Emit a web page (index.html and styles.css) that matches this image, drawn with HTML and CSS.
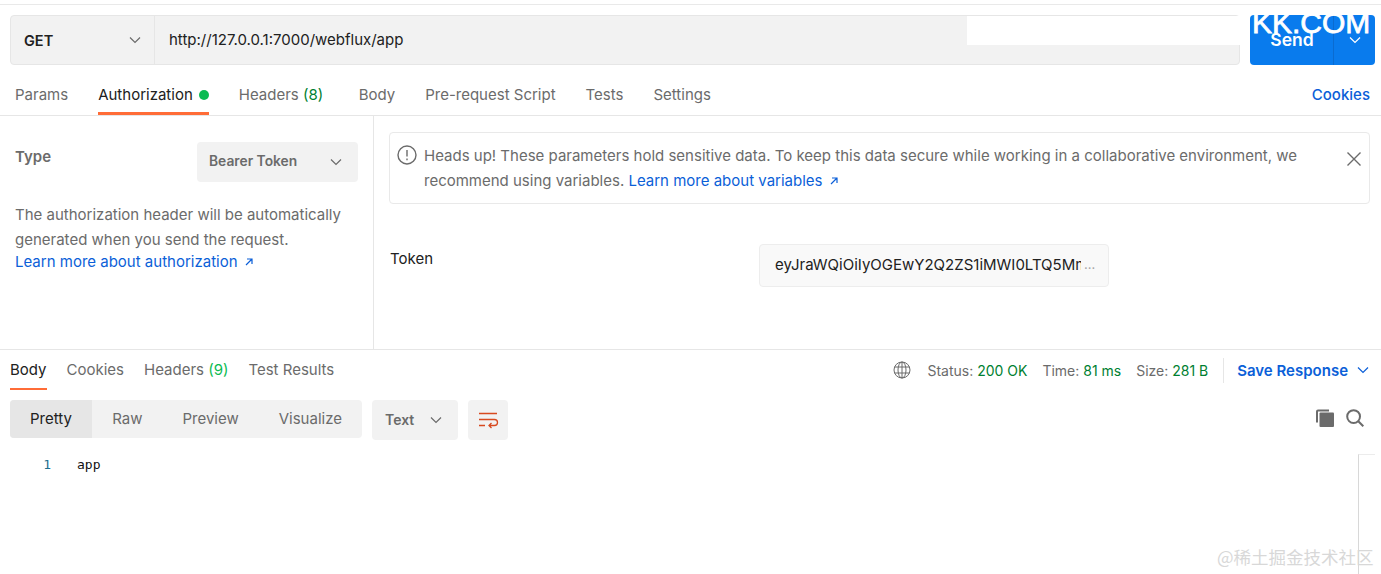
FILE: index.html
```html
<!DOCTYPE html>
<html lang="en">
<head>
<meta charset="utf-8">
<title>Postman request</title>
<link rel="stylesheet" href="styles.css">
</head>
<body>
<div class="app">
  <section class="urlbar">
    <div class="urlgroup">
      <div class="method"><span>GET</span>
        <svg class="chev" viewBox="0 0 12 8"><path d="M1 1.5l5 5 5-5"/></svg>
      </div>
      <div class="url">http://127.0.0.1:7000/webflux/app</div>
    </div>
    <div class="send">
      <div class="send-main">Send</div>
      <div class="send-more"><svg class="chev" viewBox="0 0 12 8"><path d="M1 1.5l5 5 5-5"/></svg></div>
    </div>
  </section>

  <nav class="reqtabs">
    <a class="tab">Params</a>
    <a class="tab active">Authorization<i class="dot"></i></a>
    <a class="tab counted">Headers <em class="count">(8)</em></a>
    <a class="tab">Body</a>
    <a class="tab">Pre-request Script</a>
    <a class="tab">Tests</a>
    <a class="tab">Settings</a>
    <a class="cookies">Cookies</a>
  </nav>

  <section class="auth">
    <aside class="auth-left">
      <div class="type-row">
        <span class="type-label">Type</span>
        <div class="select"><span>Bearer Token</span>
          <svg class="chev" viewBox="0 0 12 8"><path d="M1 1.5l5 5 5-5"/></svg>
        </div>
      </div>
      <p class="desc">The authorization header will be automatically generated when you send the request.</p>
      <a class="learn">Learn more about authorization <svg class="arrow" viewBox="0 0 10 10"><path d="M2 8l6-6M3 2h5v5"/></svg></a>
    </aside>
    <div class="auth-right">
      <div class="notice">
        <svg class="info" viewBox="0 0 20 20"><circle cx="10" cy="10" r="9"/><path d="M10 5v6.5M10 13.6v1.6"/></svg>
        <p>Heads up! These parameters hold sensitive data. To keep this data secure while working in a collaborative environment, we recommend using variables. <a class="link">Learn more about variables <svg class="arrow" viewBox="0 0 10 10"><path d="M2 8l6-6M3 2h5v5"/></svg></a></p>
        <svg class="close" viewBox="0 0 16 16"><path d="M1.5 1.5l13 13M14.5 1.5l-13 13"/></svg>
      </div>
      <div class="token-row">
        <span class="token-label">Token</span>
        <div class="token-input"><span class="token-text">eyJraWQiOiIyOGEwY2Q2ZS1iMWI0LTQ5Mm</span><span class="token-dots">...</span></div>
      </div>
    </div>
  </section>

  <section class="response">
    <div class="restabs">
      <nav class="restab-list">
        <a class="rtab active">Body</a>
        <a class="rtab">Cookies</a>
        <a class="rtab">Headers <em class="count light">(9)</em></a>
        <a class="rtab">Test Results</a>
      </nav>
      <div class="status">
        <svg class="globe" viewBox="0 0 18 18"><circle cx="9" cy="9" r="8"/><ellipse cx="9" cy="9" rx="4" ry="8"/><path d="M1.6 6h14.8M1.6 12h14.8M9 1v16"/></svg>
        <span class="stat">Status: <b>200 OK</b></span>
        <span class="stat">Time: <b>81 ms</b></span>
        <span class="stat">Size: <b>281 B</b></span>
        <span class="vr"></span>
        <a class="save">Save Response</a>
        <svg class="chev blue" viewBox="0 0 12 8"><path d="M1 1.5l5 5 5-5"/></svg>
      </div>
    </div>
    <div class="toolbar">
      <div class="segment">
        <span class="seg on">Pretty</span>
        <span class="seg">Raw</span>
        <span class="seg">Preview</span>
        <span class="seg">Visualize</span>
      </div>
      <div class="format"><span>Text</span>
        <svg class="chev" viewBox="0 0 12 8"><path d="M1 1.5l5 5 5-5"/></svg>
      </div>
      <div class="wrap-btn">
        <svg viewBox="0 0 20 16"><path d="M1 1.5h18M1 7.5h15.5a2.8 2.8 0 0 1 0 6H11M13.5 11l-2.5 2.5 2.5 2.5M1 13.5h6"/></svg>
      </div>
      <div class="tools">
        <svg class="copy" viewBox="0 0 18 18"><path class="copy-back" d="M0 2.5A2 2 0 0 1 2 .5h11v2H2v11H0z"/><rect x="3.5" y="3.5" width="14.5" height="14.5" rx="1"/></svg>
        <svg class="search" viewBox="0 0 18 18"><circle cx="7.6" cy="7.6" r="6.4"/><path d="M12.3 12.3l5 5"/></svg>
      </div>
    </div>
    <div class="code">
      <span class="ln">1</span><span class="src">app</span>
      <span class="scrolltrack"></span>
    </div>
  </section>
</div>
<div class="wm-patch"></div>
<div class="wm-top">KK.COM</div>
<div class="wm-bottom">@稀土掘金技术社区</div>
</body>
</html>
```
FILE: styles.css
```css
* { box-sizing: border-box; }
html, body { margin: 0; height: 100%; }
body {
  background: #fff;
  color: #6b6b6b;
  font-family: Inter, "Noto Sans", sans-serif;
  font-size: 15px;
  overflow: hidden;
  position: relative;
}
a { color: inherit; text-decoration: none; }
em { font-style: normal; }
p { margin: 0; }
svg { display: block; flex: none; }

.app { display: flex; flex-direction: column; height: 574px; padding-top: 4px; }

.chev { width: 12px; height: 8px; fill: none; stroke: #6b6b6b; stroke-width: 1.2; }
.chev.blue { stroke: #0b5fd8; }
.arrow { display: inline-block; width: 10px; height: 10px; fill: none; stroke: currentColor; stroke-width: 1.2; margin-left: 2px; }

.urlbar {
  display: flex;
  gap: 10px;
  height: 61px;
  padding: 10px 6px 0 10px;
  border-top: 1px solid #e9e9e9;
}
.urlgroup {
  flex: 1;
  display: flex;
  height: 50px;
  background: #f2f2f2;
  border: 1px solid #e6e6e6;
  border-radius: 4px;
}
.method {
  width: 144px;
  display: flex;
  align-items: center;
  justify-content: space-between;
  padding: 0 13px;
  color: #212121;
  font-size: 14.5px;
  font-weight: 600;
  border-right: 1px solid #e6e6e6;
}
.url { padding: 0 14px; line-height: 47px; color: #212121; }
.send {
  width: 125px;
  height: 50px;
  display: flex;
  background: #097bed;
  color: #fff;
  border-radius: 4px;
  font-weight: 600;
  font-size: 17.5px;
}
.send-main { width: 84px; padding-left: 1px; text-align: center; line-height: 49px; border-right: 1px solid #0a6bd0; }
.send-more { flex: 1; display: flex; align-items: center; justify-content: center; padding-bottom: 1px; }
.send-more .chev { stroke: #fff; }

.reqtabs {
  display: flex;
  align-items: stretch;
  height: 51px;
  padding: 0 11px 0 15px;
  gap: 30px;
  border-bottom: 1px solid #e6e6e6;
}
.tab { display: flex; align-items: center; padding-top: 9px; white-space: pre; }
.tab.active { color: #212121; gap: 6px; border-bottom: 3px solid #ff6c37; padding-top: 12px; }
.tab.counted { margin-right: 5.5px; }
.dot { width: 10px; height: 10px; border-radius: 50%; background: #0cbb52; }
.count { color: #007f31; }
.count.light { color: #0cbb52; }
.cookies { margin-left: auto; align-self: center; padding-top: 9px; color: #0b5fd8; font-weight: 500; }

.auth { display: flex; height: 234px; border-bottom: 1px solid #e6e6e6; }
.auth-left {
  width: 374px;
  padding: 26px 15px 0;
  border-right: 1px solid #e6e6e6;
  line-height: 22px;
}
.type-row { display: flex; justify-content: space-between; align-items: flex-start; }
.type-label { font-weight: 600; margin-top: 4px; }
.select {
  width: 161px;
  height: 40px;
  padding: 0 16px 2px 12px;
  display: flex;
  align-items: center;
  justify-content: space-between;
  background: #f2f2f2;
  border-radius: 4px;
  font-size: 13.8px;
  font-weight: 600;
}
.select .chev { margin-top: 2px; }
.desc { margin-top: 20px; line-height: 25px; width: 340px; }
.learn { display: block; color: #0b5fd8; margin-top: -1px; }
.auth-right { flex: 1; padding: 16px 11px 0 15px; }
.notice {
  display: flex;
  align-items: flex-start;
  height: 72px;
  padding: 11px 7px 0 7px;
  border: 1px solid #e9e9e9;
  border-radius: 4px;
  line-height: 25px;
}
.notice p { flex: 1; margin: -1px 0 0 7px; padding-right: 24px; }
.info { width: 20px; height: 20px; margin-top: 1px; fill: none; stroke: #6b6b6b; stroke-width: 1.4; }
.link { color: #0b5fd8; }
.close { width: 16px; height: 16px; margin-top: 7px; fill: none; stroke: #6b6b6b; stroke-width: 1.4; }
.token-row { display: flex; align-items: center; margin-top: 40px; padding-left: 1px; }
.token-label { width: 369px; color: #212121; margin-top: -14px; }
.token-input {
  width: 350px;
  height: 43px;
  display: flex;
  align-items: center;
  padding: 0 9px 3px 15px;
  background: #f9f9f9;
  border: 1px solid #ededed;
  border-radius: 4px;
  color: #212121;
  font-size: 15px;
}
.token-text { width: 306px; overflow: hidden; white-space: nowrap; }
.token-dots { margin-left: 3px; color: #a6a6a6; font-size: 13px; }

.response { flex: 1; display: flex; flex-direction: column; padding: 0 6px 0 10px; }
.restabs { display: flex; justify-content: space-between; height: 40px; }
.restab-list { display: flex; gap: 20px; }
.rtab { padding-top: 10px; white-space: pre; height: 40px; }
.rtab.active { color: #212121; border-bottom: 2px solid #ff6c37; }
.status { display: flex; align-items: center; font-size: 14px; padding-right: 6px; height: 40px; }
.globe { width: 18px; height: 18px; margin-right: 16px; fill: none; stroke: #6b6b6b; stroke-width: 1; }
.stat { margin-right: 15px; }
.stat b { font-weight: 400; color: #007f31; }
.vr { width: 1px; height: 25px; background: #e6e6e6; margin-right: 13px; }
.save { color: #0b5fd8; font-weight: 600; font-size: 15px; margin-right: 9px; }

.toolbar { display: flex; align-items: flex-start; margin-top: 10px; }
.segment { display: flex; width: 352px; height: 38px; background: #f2f2f2; border-radius: 4px; overflow: hidden; }
.seg { line-height: 38px; padding-left: 20px; padding-right: 20px; }
.seg.on { width: 83px; background: #e6e6e6; color: #212121; }
.format {
  width: 86px;
  height: 40px;
  margin-left: 10px;
  display: flex;
  align-items: center;
  justify-content: space-between;
  padding: 0 16px 2px 13px;
  background: #f2f2f2;
  border-radius: 4px;
  font-size: 14px;
  font-weight: 600;
}
.format .chev { margin-top: 2px; }
.wrap-btn {
  width: 40px;
  height: 40px;
  margin-left: 10px;
  display: flex;
  align-items: center;
  justify-content: center;
  background: #f2f2f2;
  border-radius: 4px;
}
.wrap-btn svg { width: 20px; height: 16px; fill: none; stroke: #d84a20; stroke-width: 1.3; overflow: visible; }
.tools { margin-left: auto; display: flex; gap: 12px; padding: 9px 11px 0 0; }
.copy { width: 18px; height: 18px; fill: #6b6b6b; }
.search { width: 18px; height: 18px; fill: none; stroke: #6b6b6b; stroke-width: 2; }

.code {
  position: relative;
  flex: 1;
  margin-top: 15px;
  font-family: "DejaVu Sans Mono", monospace;
  font-size: 13px;
  display: flex;
  line-height: 20px;
}
.ln { width: 41px; text-align: right; color: #1f6f8f; }
.src { margin-left: 26px; color: #111; }
.scrolltrack {
  position: absolute;
  left: 1348px;
  top: -1px;
  bottom: 0;
  width: 17px;
  border-left: 1px solid #d8d8d8;
  border-top: 1px solid #ececec;
}

.wm-patch { position: absolute; left: 967px; top: 16px; width: 273px; height: 29px; background: #fff; }
.wm-top {
  position: absolute;
  left: 1252px;
  top: 8px;
  color: #fff;
  -webkit-text-stroke: 0.8px #fff;
  font-family: "Liberation Sans", sans-serif;
  font-size: 30px;
  line-height: 30px;
  white-space: nowrap;
}
.wm-bottom {
  position: absolute;
  left: 1217px;
  top: 547px;
  color: #d8d8d8;
  font-family: "Noto Sans CJK SC", sans-serif;
  font-size: 17.5px;
  line-height: 20px;
  white-space: nowrap;
}
```
